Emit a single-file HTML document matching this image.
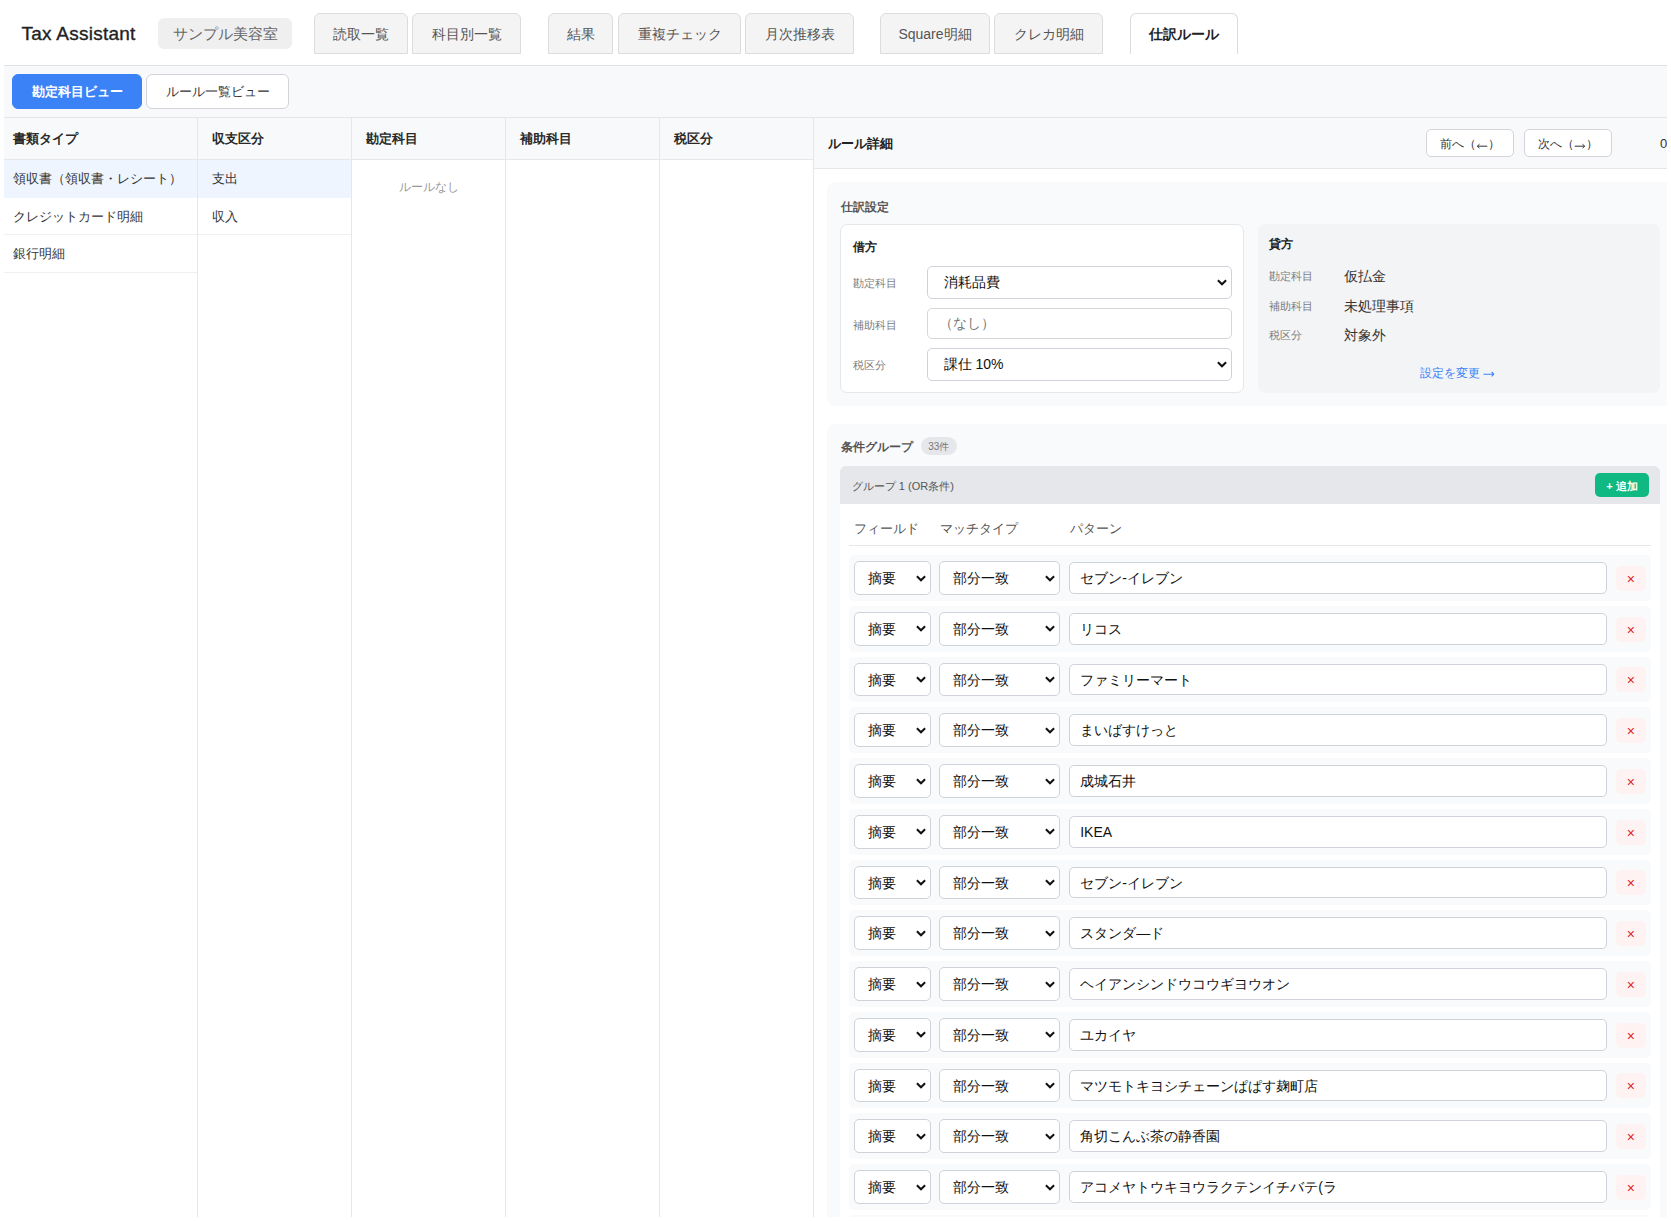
<!DOCTYPE html>
<html lang="ja">
<head>
<meta charset="utf-8">
<title>Tax Assistant</title>
<style>
*{box-sizing:border-box;margin:0;padding:0}
html,body{width:1671px;height:1221px;overflow:hidden;background:#fff}
body{font-family:"Liberation Sans",sans-serif;color:#333;position:relative}
.abs{position:absolute}
#app{position:absolute;left:4px;top:0;width:1663px;height:1217px;overflow:hidden}
/* header */
#hdr{position:absolute;left:0;top:0;width:1663px;height:66px;border-bottom:1px solid #e1e1e1;background:#fff}
.brand{position:absolute;left:17.5px;top:22px;font-size:19px;letter-spacing:0.25px;line-height:24px;color:#222;-webkit-text-stroke:0.35px #222;white-space:nowrap}
.shop{position:absolute;left:154px;top:18px;width:134px;height:31px;border-radius:6px;background:#efefef;color:#666;font-size:15px;line-height:32px;text-align:center;white-space:nowrap}
.tab{position:absolute;top:13px;height:41px;border:1px solid #dcdcdc;border-radius:6px 6px 0 0;background:#f4f4f4;color:#555;font-size:14px;line-height:40px;text-align:center;white-space:nowrap}
.tab.on{background:#fff;color:#222;font-weight:bold;border-bottom:none;line-height:41px}
/* toolbar */
#tb{position:absolute;left:0;top:66px;width:1663px;height:52px;background:#f8f9fa;border-bottom:1px solid #e3e5e8}
.btn{position:absolute;top:8px;height:35px;border-radius:6px;font-size:13px;line-height:33px;text-align:center;white-space:nowrap}
.btn.pri{left:8px;width:130px;background:#3b82f6;color:#fff;font-weight:bold;border:1px solid #3b82f6}
.btn.sec{left:142px;width:143px;background:#fff;color:#333;border:1px solid #d4d4d8}
/* columns */
.col{position:absolute;top:118px;height:1099px;background:#fff;border-right:1px solid #e5e7eb}
.ch{height:42px;background:#f8f9fa;border-bottom:1px solid #e5e7eb;font-size:13px;font-weight:bold;line-height:41px;color:#2a2a2a;padding-left:14px;white-space:nowrap}
.ci{height:37.5px;border-bottom:1px solid #eef0f2;font-size:13px;line-height:38px;color:#333;padding-left:14px;white-space:nowrap}
.ci.sel{background:#eef5fe;border-bottom-color:#eef5fe}
.empty{text-align:center;color:#999;font-size:12px;line-height:18px;padding-top:18px}
/* right panel */
#rp{position:absolute;left:810px;top:118px;width:880px;height:1099px;background:#fff}
.rph{position:absolute;left:0;top:0;width:880px;height:51px;background:#f8f9fa;border-bottom:1px solid #e5e7eb}
.rpt{position:absolute;left:14px;top:17px;font-size:13px;font-weight:bold;line-height:18px;color:#222;white-space:nowrap}
.nb{position:absolute;top:11px;width:88px;height:28px;border:1px solid #d4d4d8;border-radius:5px;background:#fff;font-size:12px;line-height:29px;text-align:center;color:#333;white-space:nowrap}
.sec1{position:absolute;left:13px;top:64px;width:860px;height:223.5px;background:#f9fafb;border-radius:8px}
.sec2{position:absolute;left:13px;top:306px;width:860px;height:1000px;background:#f9fafb;border-radius:8px}
.stitle{position:absolute;left:13.5px;font-size:12px;font-weight:bold;color:#555;line-height:16px;white-space:nowrap}
.dr{position:absolute;left:13px;top:42px;width:403.5px;height:169px;background:#fff;border:1px solid #e5e7eb;border-radius:7px}
.cr{position:absolute;left:430.8px;top:42px;width:402.2px;height:168.5px;background:#f3f4f6;border-radius:7px}
.bt{position:absolute;left:12px;font-size:12px;font-weight:bold;color:#222;line-height:16px}
.lbl{position:absolute;left:12px;font-size:11px;color:#7d7d7d;line-height:14px;white-space:nowrap}
.val{position:absolute;left:86.5px;font-size:14px;color:#333;line-height:18px;white-space:nowrap}
.fsel{position:absolute;left:86px;width:304.5px;background:#fff;border:1px solid #cfd3d9;border-radius:5px;font-size:14px;color:#111;white-space:nowrap}
.chev{position:absolute;width:10px;height:7px}
.link{position:absolute;left:162px;top:141px;font-size:12px;color:#3b82f6;line-height:16px;white-space:nowrap}
.badge{position:absolute;left:94px;top:13.1px;width:35.6px;height:17.6px;border-radius:9px;background:#e5e7eb;color:#777;font-size:10px;line-height:20.6px;text-align:center}
.gh{position:absolute;left:13px;top:41.9px;width:820px;height:37.7px;background:#e5e7eb;border-radius:6px 6px 0 0}
.ght{position:absolute;left:11.8px;top:12px;font-size:11px;line-height:16px;color:#555;white-space:nowrap}
.add{position:absolute;left:755px;top:6.7px;width:54px;height:24.6px;border-radius:5px;background:#10b981;color:#fff;font-size:11px;font-weight:bold;line-height:27px;text-align:center;white-space:nowrap}
.gb{position:absolute;left:13px;top:79.6px;width:820px;height:1000px;background:#fff}
.colh{position:absolute;top:96px;font-size:13px;line-height:18px;color:#555;white-space:nowrap}
.row{position:absolute;left:22px;width:802px;height:45.75px;background:#f9fafb;border-radius:5px}
.rsel{position:absolute;top:6px;height:33.75px;background:#fff;border:1px solid #cfd3d9;border-radius:5px;font-size:14px;line-height:33px;color:#111;padding-left:13px;white-space:nowrap}
.rin{position:absolute;left:220.2px;top:7px;width:537.5px;height:31.75px;background:#fff;border:1px solid #cfd3d9;border-radius:5px;font-size:14px;line-height:31px;color:#111;padding-left:10px;white-space:nowrap}
.xb{position:absolute;left:766.8px;top:10.8px;width:30.2px;height:25px;background:#fef2f2;border-radius:5px;color:#dc2626;font-size:14px;line-height:27px;text-align:center}
</style>
</head>
<body>
<div id="app">
  <div id="hdr">
    <div class="brand">Tax Assistant</div>
    <div class="shop">サンプル美容室</div>
    <div class="tab" style="left:310px;width:94px">読取一覧</div>
    <div class="tab" style="left:408px;width:109px">科目別一覧</div>
    <div class="tab" style="left:544px;width:65px">結果</div>
    <div class="tab" style="left:614px;width:123px">重複チェック</div>
    <div class="tab" style="left:741px;width:109px">月次推移表</div>
    <div class="tab" style="left:876px;width:110px">Square明細</div>
    <div class="tab" style="left:990px;width:109px">クレカ明細</div>
    <div class="tab on" style="left:1125.5px;width:108.5px">仕訳ルール</div>
  </div>
  <div id="tb">
    <div class="btn pri">勘定科目ビュー</div>
    <div class="btn sec">ルール一覧ビュー</div>
  </div>
  <div class="col" style="left:0;width:194px">
    <div class="ch" style="padding-left:9px">書類タイプ</div>
    <div class="ci sel" style="padding-left:9px">領収書（領収書・レシート）</div>
    <div class="ci" style="padding-left:9px">クレジットカード明細</div>
    <div class="ci" style="padding-left:9px">銀行明細</div>
  </div>
  <div class="col" style="left:194px;width:154px">
    <div class="ch">収支区分</div>
    <div class="ci sel">支出</div>
    <div class="ci">収入</div>
  </div>
  <div class="col" style="left:348px;width:154px">
    <div class="ch">勘定科目</div>
    <div class="empty">ルールなし</div>
  </div>
  <div class="col" style="left:502px;width:154px">
    <div class="ch">補助科目</div>
  </div>
  <div class="col" style="left:656px;width:154px">
    <div class="ch">税区分</div>
  </div>
  <div id="rp">
    <div class="rph">
      <div class="rpt">ルール詳細</div>
      <div class="nb" style="left:612px">前へ（<svg width="12" height="8" viewBox="0 0 12 8" style="vertical-align:-2px"><path d="M1.3 4.2H11.3M1.3 4.2L3.5 2.2M1.3 4.2L3.5 6.2" stroke="#333" stroke-width="1" fill="none"/></svg>）</div>
      <div class="nb" style="left:710px">次へ（<svg width="12" height="8" viewBox="0 0 12 8" style="vertical-align:-2px"><path d="M0.7 4.2H10.7M10.7 4.2L8.5 2.2M10.7 4.2L8.5 6.2" stroke="#333" stroke-width="1" fill="none"/></svg>）</div>
      <div class="abs" style="left:846px;top:17px;font-size:13px;line-height:18px;color:#333">0 / 33</div>
    </div>
    <div class="sec1">
      <div class="stitle" style="top:16.5px">仕訳設定</div>
      <div class="dr">
        <div class="bt" style="top:14px">借方</div>
        <div class="lbl" style="top:51px">勘定科目</div>
        <div class="lbl" style="top:92.5px">補助科目</div>
        <div class="lbl" style="top:133px">税区分</div>
        <div class="fsel" style="top:41.3px;height:32.4px;line-height:30.4px;padding-left:15.5px">消耗品費<svg class="chev" viewBox="0 0 10 7" style="right:4px;top:11.7px"><path d="M0.9 1.2 L5 5.3 L9.1 1.2" fill="none" stroke="#111" stroke-width="2"/></svg></div>
        <div class="fsel" style="top:83.2px;height:30.4px;line-height:28.4px;padding-left:11px;color:#777;border-color:#d4d7dc">（なし）</div>
        <div class="fsel" style="top:123.3px;height:32.4px;line-height:30.4px;padding-left:15.5px">課仕 10%<svg class="chev" viewBox="0 0 10 7" style="right:4px;top:11.7px"><path d="M0.9 1.2 L5 5.3 L9.1 1.2" fill="none" stroke="#111" stroke-width="2"/></svg></div>
      </div>
      <div class="cr">
        <div class="bt" style="left:11.7px;top:12px">貸方</div>
        <div class="lbl" style="left:11.7px;top:44.6px">勘定科目</div>
        <div class="lbl" style="left:11.7px;top:74.6px">補助科目</div>
        <div class="lbl" style="left:11.7px;top:104.3px">税区分</div>
        <div class="val" style="top:42.6px">仮払金</div>
        <div class="val" style="top:72.6px">未処理事項</div>
        <div class="val" style="top:102.3px">対象外</div>
        <div class="link">設定を変更<svg width="12" height="8" viewBox="0 0 12 8" style="vertical-align:-0.5px;margin-left:3px"><path d="M0.5 4.2H11M11 4.2L8.6 2M11 4.2L8.6 6.4" stroke="#3b82f6" stroke-width="1.1" fill="none"/></svg></div>
      </div>
    </div>
    <div class="sec2">
      <div class="stitle" style="top:14.6px">条件グループ</div>
      <div class="badge">33件</div>
      <div class="gh">
        <div class="ght">グループ 1 (OR条件)</div>
        <div class="add">+ 追加</div>
      </div>
      <div class="gb"></div>
      <div class="colh" style="left:27.3px">フィールド</div>
      <div class="colh" style="left:112.8px">マッチタイプ</div>
      <div class="colh" style="left:242.7px">パターン</div>
      <div class="abs" style="left:22px;top:120.5px;width:802px;height:1px;background:#e5e7eb"></div>
      <div class="row" style="top:131.10px">
        <div class="rsel" style="left:5.3px;width:76.3px">摘要<svg class="chev" viewBox="0 0 10 7" style="right:4px;top:12.5px"><path d="M0.9 1.2 L5 5.3 L9.1 1.2" fill="none" stroke="#111" stroke-width="2"/></svg></div>
        <div class="rsel" style="left:90.3px;width:120.4px">部分一致<svg class="chev" viewBox="0 0 10 7" style="right:4px;top:12.5px"><path d="M0.9 1.2 L5 5.3 L9.1 1.2" fill="none" stroke="#111" stroke-width="2"/></svg></div>
        <div class="rin">セブン-イレブン</div>
        <div class="xb">×</div>
      </div><div class="row" style="top:181.85px">
        <div class="rsel" style="left:5.3px;width:76.3px">摘要<svg class="chev" viewBox="0 0 10 7" style="right:4px;top:12.5px"><path d="M0.9 1.2 L5 5.3 L9.1 1.2" fill="none" stroke="#111" stroke-width="2"/></svg></div>
        <div class="rsel" style="left:90.3px;width:120.4px">部分一致<svg class="chev" viewBox="0 0 10 7" style="right:4px;top:12.5px"><path d="M0.9 1.2 L5 5.3 L9.1 1.2" fill="none" stroke="#111" stroke-width="2"/></svg></div>
        <div class="rin">リコス</div>
        <div class="xb">×</div>
      </div><div class="row" style="top:232.60px">
        <div class="rsel" style="left:5.3px;width:76.3px">摘要<svg class="chev" viewBox="0 0 10 7" style="right:4px;top:12.5px"><path d="M0.9 1.2 L5 5.3 L9.1 1.2" fill="none" stroke="#111" stroke-width="2"/></svg></div>
        <div class="rsel" style="left:90.3px;width:120.4px">部分一致<svg class="chev" viewBox="0 0 10 7" style="right:4px;top:12.5px"><path d="M0.9 1.2 L5 5.3 L9.1 1.2" fill="none" stroke="#111" stroke-width="2"/></svg></div>
        <div class="rin">ファミリーマート</div>
        <div class="xb">×</div>
      </div><div class="row" style="top:283.35px">
        <div class="rsel" style="left:5.3px;width:76.3px">摘要<svg class="chev" viewBox="0 0 10 7" style="right:4px;top:12.5px"><path d="M0.9 1.2 L5 5.3 L9.1 1.2" fill="none" stroke="#111" stroke-width="2"/></svg></div>
        <div class="rsel" style="left:90.3px;width:120.4px">部分一致<svg class="chev" viewBox="0 0 10 7" style="right:4px;top:12.5px"><path d="M0.9 1.2 L5 5.3 L9.1 1.2" fill="none" stroke="#111" stroke-width="2"/></svg></div>
        <div class="rin">まいばすけっと</div>
        <div class="xb">×</div>
      </div><div class="row" style="top:334.10px">
        <div class="rsel" style="left:5.3px;width:76.3px">摘要<svg class="chev" viewBox="0 0 10 7" style="right:4px;top:12.5px"><path d="M0.9 1.2 L5 5.3 L9.1 1.2" fill="none" stroke="#111" stroke-width="2"/></svg></div>
        <div class="rsel" style="left:90.3px;width:120.4px">部分一致<svg class="chev" viewBox="0 0 10 7" style="right:4px;top:12.5px"><path d="M0.9 1.2 L5 5.3 L9.1 1.2" fill="none" stroke="#111" stroke-width="2"/></svg></div>
        <div class="rin">成城石井</div>
        <div class="xb">×</div>
      </div><div class="row" style="top:384.85px">
        <div class="rsel" style="left:5.3px;width:76.3px">摘要<svg class="chev" viewBox="0 0 10 7" style="right:4px;top:12.5px"><path d="M0.9 1.2 L5 5.3 L9.1 1.2" fill="none" stroke="#111" stroke-width="2"/></svg></div>
        <div class="rsel" style="left:90.3px;width:120.4px">部分一致<svg class="chev" viewBox="0 0 10 7" style="right:4px;top:12.5px"><path d="M0.9 1.2 L5 5.3 L9.1 1.2" fill="none" stroke="#111" stroke-width="2"/></svg></div>
        <div class="rin">IKEA</div>
        <div class="xb">×</div>
      </div><div class="row" style="top:435.60px">
        <div class="rsel" style="left:5.3px;width:76.3px">摘要<svg class="chev" viewBox="0 0 10 7" style="right:4px;top:12.5px"><path d="M0.9 1.2 L5 5.3 L9.1 1.2" fill="none" stroke="#111" stroke-width="2"/></svg></div>
        <div class="rsel" style="left:90.3px;width:120.4px">部分一致<svg class="chev" viewBox="0 0 10 7" style="right:4px;top:12.5px"><path d="M0.9 1.2 L5 5.3 L9.1 1.2" fill="none" stroke="#111" stroke-width="2"/></svg></div>
        <div class="rin">セブン-イレブン</div>
        <div class="xb">×</div>
      </div><div class="row" style="top:486.35px">
        <div class="rsel" style="left:5.3px;width:76.3px">摘要<svg class="chev" viewBox="0 0 10 7" style="right:4px;top:12.5px"><path d="M0.9 1.2 L5 5.3 L9.1 1.2" fill="none" stroke="#111" stroke-width="2"/></svg></div>
        <div class="rsel" style="left:90.3px;width:120.4px">部分一致<svg class="chev" viewBox="0 0 10 7" style="right:4px;top:12.5px"><path d="M0.9 1.2 L5 5.3 L9.1 1.2" fill="none" stroke="#111" stroke-width="2"/></svg></div>
        <div class="rin">スタンダ—ド</div>
        <div class="xb">×</div>
      </div><div class="row" style="top:537.10px">
        <div class="rsel" style="left:5.3px;width:76.3px">摘要<svg class="chev" viewBox="0 0 10 7" style="right:4px;top:12.5px"><path d="M0.9 1.2 L5 5.3 L9.1 1.2" fill="none" stroke="#111" stroke-width="2"/></svg></div>
        <div class="rsel" style="left:90.3px;width:120.4px">部分一致<svg class="chev" viewBox="0 0 10 7" style="right:4px;top:12.5px"><path d="M0.9 1.2 L5 5.3 L9.1 1.2" fill="none" stroke="#111" stroke-width="2"/></svg></div>
        <div class="rin">ヘイアンシンドウコウギヨウオン</div>
        <div class="xb">×</div>
      </div><div class="row" style="top:587.85px">
        <div class="rsel" style="left:5.3px;width:76.3px">摘要<svg class="chev" viewBox="0 0 10 7" style="right:4px;top:12.5px"><path d="M0.9 1.2 L5 5.3 L9.1 1.2" fill="none" stroke="#111" stroke-width="2"/></svg></div>
        <div class="rsel" style="left:90.3px;width:120.4px">部分一致<svg class="chev" viewBox="0 0 10 7" style="right:4px;top:12.5px"><path d="M0.9 1.2 L5 5.3 L9.1 1.2" fill="none" stroke="#111" stroke-width="2"/></svg></div>
        <div class="rin">ユカイヤ</div>
        <div class="xb">×</div>
      </div><div class="row" style="top:638.60px">
        <div class="rsel" style="left:5.3px;width:76.3px">摘要<svg class="chev" viewBox="0 0 10 7" style="right:4px;top:12.5px"><path d="M0.9 1.2 L5 5.3 L9.1 1.2" fill="none" stroke="#111" stroke-width="2"/></svg></div>
        <div class="rsel" style="left:90.3px;width:120.4px">部分一致<svg class="chev" viewBox="0 0 10 7" style="right:4px;top:12.5px"><path d="M0.9 1.2 L5 5.3 L9.1 1.2" fill="none" stroke="#111" stroke-width="2"/></svg></div>
        <div class="rin">マツモトキヨシチェーンぱぱす麹町店</div>
        <div class="xb">×</div>
      </div><div class="row" style="top:689.35px">
        <div class="rsel" style="left:5.3px;width:76.3px">摘要<svg class="chev" viewBox="0 0 10 7" style="right:4px;top:12.5px"><path d="M0.9 1.2 L5 5.3 L9.1 1.2" fill="none" stroke="#111" stroke-width="2"/></svg></div>
        <div class="rsel" style="left:90.3px;width:120.4px">部分一致<svg class="chev" viewBox="0 0 10 7" style="right:4px;top:12.5px"><path d="M0.9 1.2 L5 5.3 L9.1 1.2" fill="none" stroke="#111" stroke-width="2"/></svg></div>
        <div class="rin">角切こんぶ茶の静香園</div>
        <div class="xb">×</div>
      </div><div class="row" style="top:740.10px">
        <div class="rsel" style="left:5.3px;width:76.3px">摘要<svg class="chev" viewBox="0 0 10 7" style="right:4px;top:12.5px"><path d="M0.9 1.2 L5 5.3 L9.1 1.2" fill="none" stroke="#111" stroke-width="2"/></svg></div>
        <div class="rsel" style="left:90.3px;width:120.4px">部分一致<svg class="chev" viewBox="0 0 10 7" style="right:4px;top:12.5px"><path d="M0.9 1.2 L5 5.3 L9.1 1.2" fill="none" stroke="#111" stroke-width="2"/></svg></div>
        <div class="rin">アコメヤトウキヨウラクテンイチバテ(ラ</div>
        <div class="xb">×</div>
      </div><div class="row" style="top:790.85px">
        <div class="rsel" style="left:5.3px;width:76.3px">摘要<svg class="chev" viewBox="0 0 10 7" style="right:4px;top:12.5px"><path d="M0.9 1.2 L5 5.3 L9.1 1.2" fill="none" stroke="#111" stroke-width="2"/></svg></div>
        <div class="rsel" style="left:90.3px;width:120.4px">部分一致<svg class="chev" viewBox="0 0 10 7" style="right:4px;top:12.5px"><path d="M0.9 1.2 L5 5.3 L9.1 1.2" fill="none" stroke="#111" stroke-width="2"/></svg></div>
        <div class="rin">ダミー</div>
        <div class="xb">×</div>
      </div>
    </div>
  </div>
</div>
</body>
</html>
